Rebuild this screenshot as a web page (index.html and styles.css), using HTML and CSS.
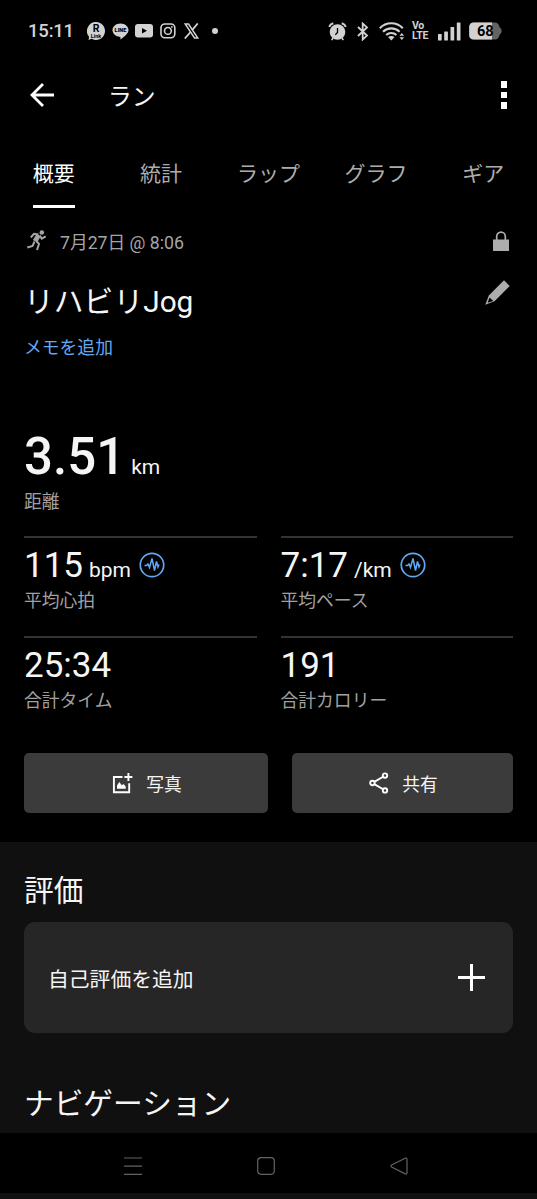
FILE: index.html
```html
<!DOCTYPE html>
<html lang="ja">
<head>
    <meta charset="UTF-8">
    <meta name="viewport" content="width=device-width, initial-scale=1.0">
    <title>ラン</title>
    <link rel="stylesheet" href="styles.css">
</head>
<body>
    <div class="status-bar">
        <span class="clock">15:11</span>
        <svg class="icon-link" width="18" height="18" viewBox="0 0 18 18">
            <path d="M9 0a9 9 0 1 1-4.500 16.800L1.500 18l.6-3.200A9 9 0 0 1 9 0z" fill="#d2d2d2"/>
            <text x="9" y="9.500" text-anchor="middle" font-size="10.500" font-weight="700">R</text>
            <text x="9" y="16" text-anchor="middle" font-size="5.500" font-weight="700">Link</text>
        </svg>
        <svg class="icon-line" width="17" height="17" viewBox="0 0 17 17">
            <path d="M8.500.5c4.500 0 8 2.900 8 6.600 0 3.300-3.600 6.200-7.900 9.400-.3-.9.100-2.200-.4-2.600C3.700 13.700.5 10.700.5 7.100.5 3.400 4 .5 8.500.5z" fill="#d2d2d2"/>
            <text x="8.500" y="9.300" text-anchor="middle" font-size="5.600" font-weight="900">LINE</text>
        </svg>
        <svg class="icon-youtube" width="18" height="14" viewBox="0 0 18 14">
            <rect width="18" height="13.500" rx="3" fill="#d2d2d2"/>
            <path d="M7 4l5 2.800-5 2.800z" fill="#000"/>
        </svg>
        <svg class="icon-instagram" width="16" height="16" viewBox="0 0 16 16" fill="none" stroke="#d2d2d2" stroke-width="1.600">
            <rect x="1" y="1" width="13.800" height="13.800" rx="3.800"/>
            <circle cx="7.900" cy="7.900" r="3.400"/>
            <circle cx="11.900" cy="3.900" r=".9" fill="#d2d2d2" stroke="none"/>
        </svg>
        <svg class="icon-x" width="15" height="16" viewBox="0 0 15 16" fill="none" stroke="#d2d2d2">
            <path d="M1.200 1h3.300l9.300 14h-3.300z" stroke-width="1.500"/>
            <path d="M13.700.5L8.300 6.900M6.600 9L.8 15.500" stroke-width="1.800"/>
        </svg>
        <span class="dot"></span>
        <div class="status-right">
            <svg class="icon-alarm" width="19" height="19" viewBox="0 0 19 19">
                <circle cx="9.500" cy="10" r="7.800" fill="#d2d2d2"/>
                <path d="M1.200 4.800Q2.300 2 5.300 1.200M17.800 4.800Q16.700 2 13.700 1.200" fill="none" stroke="#d2d2d2" stroke-width="2"/>
                <path d="M5 16l-1.300 2.200M14 16l1.300 2.200" stroke="#d2d2d2" stroke-width="1.600"/>
                <path d="M9.500 6v4.500L7.300 12.700" fill="none" stroke="#000" stroke-width="1.300"/>
            </svg>
            <svg class="icon-bluetooth" width="12" height="19" viewBox="0 0 12 19" fill="none" stroke="#d2d2d2" stroke-width="1.800">
                <path d="M1 5l9 8.600-4.300 3.900V1.500L10 5.400 1 14"/>
            </svg>
            <svg class="icon-wifi" width="26" height="19" viewBox="0 0 26 19">
                <g fill="none" stroke="#d2d2d2" stroke-width="2.100">
                    <path d="M.8 6.200a16 16 0 0 1 23 0"/>
                    <path d="M4 9.700a12 12 0 0 1 16.600 0"/>
                    <path d="M7.200 13a7.500 7.500 0 0 1 10.200 0"/>
                </g>
                <path d="M12.300 18.500l-3.200-3.400q3.200-2.300 6.400 0z" fill="#d2d2d2"/>
                <path d="M20.500 13.700h4.600l-2.300-2.700zM20.500 15.300h4.600L22.800 18z" fill="#d2d2d2"/>
            </svg>
            <span class="volte"><span>Vo</span><span>LTE</span></span>
            <svg class="icon-signal" width="23" height="19" viewBox="0 0 23 19" fill="#d2d2d2">
                <rect y="12" width="3.700" height="6.500" rx=".6"/>
                <rect x="6.200" y="9.500" width="3.700" height="9" rx=".6"/>
                <rect x="12.500" y="5" width="3.700" height="13.500" rx=".6"/>
                <rect x="18.800" y=".5" width="3.700" height="18" rx=".6"/>
            </svg>
            <svg class="icon-battery" width="33" height="18" viewBox="0 0 33 18">
                <path d="M5 .5h21q3.500 0 4.500 4.500Q32.700 6.500 32.700 9T30.500 13q-1 4.500-4.500 4.500H5Q.2 17.500.2 12.700V5.300Q.2.5 5 .5z" fill="#636363"/>
                <path d="M5 .5h18v17H5Q.2 17.500.2 12.700V5.300Q.2.5 5 .5z" fill="#d2d2d2"/>
                <text x="16.300" y="14.100" text-anchor="middle" font-size="14.500" font-weight="700">68</text>
            </svg>
        </div>
    </div>

    <header class="app-bar">
        <svg width="26" height="26" viewBox="0 0 26 26" fill="none" stroke="#fff" stroke-width="2.800">
            <path d="M25 13H3M14 2L3 13l11 11"/>
        </svg>
        <h1>ラン</h1>
        <div class="more"><i></i><i></i><i></i></div>
    </header>

    <nav class="tabs">
        <a class="tab active">概要</a>
        <a class="tab">統計</a>
        <a class="tab">ラップ</a>
        <a class="tab">グラフ</a>
        <a class="tab">ギア</a>
    </nav>

    <main class="summary">
        <div class="date-row">
            <svg class="runner" width="20" height="21" viewBox="0 0 20 21">
                <circle cx="14.800" cy="2.500" r="2.300" fill="#a5a5a5"/>
                <path d="M11.700 5L8 11.300" stroke="#a5a5a5" stroke-width="4.800" fill="none"/>
                <path d="M11.500 4.500L7 3.800 3.800 7.500M12.700 5.500l2.100 3.100 3.900-2.200M9.500 11l2.500 3-2 6M7.500 11.500L5.600 16 .3 17.500" fill="none" stroke="#a5a5a5" stroke-width="2"/>
            </svg>
            <span class="date">7月27日 @ 8:06</span>
            <svg class="lock" width="16" height="20" viewBox="0 0 16 20">
                <path d="M3.700 9V5.500a4.300 4.300 0 0 1 8.600 0V9" fill="none" stroke="#adadad" stroke-width="1.700"/>
                <rect y="8.500" width="16" height="11.500" fill="#adadad"/>
            </svg>
        </div>
        <div class="title-row">
            <h2>リハビリJog</h2>
            <svg width="25" height="25" viewBox="0 0 25 25">
                <path d="M19 .3L24.700 6 9.500 21.200.3 24.700 3.800 15.500z" fill="#adadad"/>
                <path d="M4.600 17.500l3.600 3.400-5.600 1.900z" fill="#000"/>
            </svg>
        </div>
        <a class="memo">メモを追加</a>

        <div class="distance">
            <div class="value">3.51<span class="unit">km</span></div>
            <div class="label">距離</div>
        </div>

        <div class="stats">
            <div class="stat">
                <div class="value">115<span class="unit">bpm</span>
                    <svg class="pulse" width="26" height="26" viewBox="0 0 26 26" fill="none" stroke="#62a8f5">
                        <circle cx="13" cy="13" r="11.700" stroke-width="1.700"/>
                        <path d="M5.500 13.500h2l1.500-1.500 1.500 3.500L13 6.500l2.500 12 2-9 1.500 5.500 1-2.500" stroke-width="1.500"/>
                    </svg>
                </div>
                <div class="label">平均心拍</div>
            </div>
            <div class="stat">
                <div class="value">7:17<span class="unit">/km</span>
                    <svg class="pulse" width="26" height="26" viewBox="0 0 26 26" fill="none" stroke="#62a8f5">
                        <circle cx="13" cy="13" r="11.700" stroke-width="1.700"/>
                        <path d="M5.500 13.500h2l1.500-1.500 1.500 3.500L13 6.500l2.500 12 2-9 1.500 5.500 1-2.500" stroke-width="1.500"/>
                    </svg>
                </div>
                <div class="label">平均ペース</div>
            </div>
            <div class="stat">
                <div class="value">25:34</div>
                <div class="label">合計タイム</div>
            </div>
            <div class="stat">
                <div class="value">191</div>
                <div class="label">合計カロリー</div>
            </div>
        </div>

        <div class="actions">
            <button class="btn-photo">
                <svg width="21" height="21" viewBox="0 0 21 21">
                    <path d="M10.500 4H1.900v15.200h15.300v-9" fill="none" stroke="#fff" stroke-width="1.900"/>
                    <path d="M16.400 0v8M12.400 4h8" stroke="#fff" stroke-width="1.900"/>
                    <path d="M5 15.700v-3.200L7.300 9l2.400 3.200 1.700-1.200 2.300 2.500v2.200z" fill="#fff"/>
                </svg>
                <span>写真</span>
            </button>
            <button class="btn-share">
                <svg width="20" height="22" viewBox="0 0 20 22" fill="none" stroke="#fff" stroke-width="1.900">
                    <circle cx="3.400" cy="11" r="2.200"/>
                    <circle cx="16" cy="3.600" r="2.200"/>
                    <circle cx="16" cy="18.400" r="2.200"/>
                    <path d="M5.300 9.900l8.800-5.200M5.300 12.100l8.800 5.200"/>
                </svg>
                <span>共有</span>
            </button>
        </div>
    </main>

    <section class="more-info">
        <h2>評価</h2>
        <div class="card">
            <span>自己評価を追加</span>
            <svg width="27" height="27" viewBox="0 0 27 27" stroke="#fff" stroke-width="3">
                <path d="M13.500 0v27M0 13.500h27"/>
            </svg>
        </div>
        <h2>ナビゲーション</h2>
    </section>

    <footer class="system-nav">
        <svg width="18" height="18" viewBox="0 0 18 18" stroke="#636363" stroke-width="1.200">
            <path d="M0 1h18M0 9.200h18M0 17.400h18"/>
        </svg>
        <svg width="18" height="18" viewBox="0 0 18 18" fill="none" stroke="#636363" stroke-width="1.200">
            <rect x=".7" y=".7" width="16.600" height="16.600" rx="3.500"/>
        </svg>
        <svg width="18" height="18" viewBox="0 0 18 18" fill="none" stroke="#636363" stroke-width="1.200">
            <path d="M15.200 1.200L1.600 8Q.2 9 1.600 10l13.600 6.900q1.800.5 1.800-1.200V2.400Q17 .8 15.200 1.200z"/>
        </svg>
    </footer>
</body>
</html>
```
FILE: styles.css
```css
* {
    box-sizing: border-box;
}

body {
    margin: 0;
    height: 1199px;
    display: flex;
    flex-direction: column;
    overflow: hidden;
    background-color: #000;
    color: #f5f5f5;
    font-family: Roboto, "Noto Sans CJK JP", sans-serif;
}

h1,
h2 {
    margin: 0;
    font-weight: 400;
}

svg {
    display: block;
    flex-shrink: 0;
}

/* ステータスバー */
.status-bar {
    height: 62px;
    padding: 0 35px 0 28px;
    display: flex;
    align-items: center;
    color: #d2d2d2;
}

.clock {
    width: 59px;
    font-size: 18.5px;
    font-weight: 500;
    letter-spacing: -0.2px;
}

.icon-line {
    margin-left: 7px;
}

.icon-youtube {
    margin-left: 6px;
}

.icon-instagram {
    margin-left: 7px;
}

.icon-x {
    margin-left: 8px;
}

.dot {
    width: 6px;
    height: 6px;
    margin-left: 13px;
    border-radius: 50%;
    background-color: #d2d2d2;
}

.status-right {
    margin-left: auto;
    display: flex;
    align-items: center;
}

.icon-bluetooth {
    margin-left: 10px;
}

.icon-wifi {
    margin-left: 10px;
}

.volte {
    width: 17px;
    margin-left: 7px;
    display: flex;
    flex-direction: column;
    font-size: 10.5px;
    line-height: 10.5px;
    font-weight: 700;
    letter-spacing: -0.3px;
}

.icon-signal {
    margin-left: 9px;
}

.icon-battery {
    margin-left: 8px;
}

/* アプリバー */
.app-bar {
    height: 66px;
    padding: 0 30px 0 29px;
    display: flex;
    align-items: center;
}

.app-bar h1 {
    margin-left: 53px;
    padding-top: 4px;
    font-size: 23.8px;
    line-height: 32px;
}

.more {
    margin-left: auto;
    display: flex;
    flex-direction: column;
    gap: 4px;
}

.more i {
    width: 6px;
    height: 6.5px;
    background-color: #fff;
}

/* タブ */
.tabs {
    height: 80px;
    display: grid;
    grid-template-columns: repeat(5, 1fr);
    justify-items: center;
}

.tab {
    height: 80px;
    padding-top: 31px;
    font-size: 21px;
    line-height: 30px;
    color: #adadad;
}

.tab.active {
    color: #fff;
    border-bottom: 3px solid #fff;
}

/* 概要 */
.summary {
    height: 634px;
    padding: 22px 24px 0;
}

.date-row {
    height: 24px;
    padding: 0 4px 0 3px;
    display: flex;
    align-items: center;
    color: #a5a5a5;
}

.runner {
    margin-bottom: 3px;
}

.date {
    margin-left: 13px;
    padding-top: 1px;
    font-size: 17.7px;
    line-height: 24px;
}

.lock {
    margin: 0 0 2px auto;
}

.title-row {
    height: 40px;
    margin-top: 26px;
    padding-right: 3px;
    display: flex;
    justify-content: space-between;
}

.title-row h2 {
    padding-top: 2px;
    font-size: 29.8px;
    line-height: 40px;
}

.memo {
    display: block;
    margin-top: 16px;
    font-size: 17.8px;
    line-height: 24px;
    color: #62a8f5;
}

.unit {
    font-size: 21px;
    font-weight: 400;
}

.label {
    font-size: 17.8px;
    line-height: 24px;
    color: #a0a0a0;
}

.distance {
    margin-top: 67px;
    height: 109px;
}

.distance .value {
    height: 63px;
    font-size: 51px;
    line-height: 60px;
    font-weight: 500;
}

.distance .unit {
    margin-left: 6px;
}

.stats {
    display: grid;
    grid-template-columns: 1fr 1fr;
    grid-auto-rows: 99.5px;
    column-gap: 24px;
}

.stat {
    border-top: 2px solid #333;
    padding-top: 8px;
}

.stat .value {
    height: 43px;
    display: flex;
    align-items: baseline;
    font-size: 35px;
    line-height: 40px;
}

.stat .unit {
    margin-left: 6px;
}

.pulse {
    align-self: flex-start;
    margin: 6px 0 0 8px;
}

.actions {
    margin-top: 18px;
    display: flex;
    gap: 24px;
}

.actions button {
    height: 60px;
    padding: 0 0 0 2px;
    border: none;
    border-radius: 5px;
    background-color: #3b3b3b;
    color: #f5f5f5;
    display: flex;
    justify-content: center;
    align-items: center;
    gap: 13px;
    font-family: inherit;
    font-size: 17.8px;
}

.btn-photo {
    width: 244px;
}

.btn-share {
    flex: 1;
}

/* 評価・ナビゲーション */
.more-info {
    height: 291px;
    padding: 29px 24px 0;
    background-color: #101010;
}

.more-info h2 {
    font-size: 29.7px;
    line-height: 40px;
}

.card {
    height: 111px;
    margin: 11px 0 51px;
    padding: 0 28px 0 24px;
    border-radius: 11px;
    background-color: #262626;
    display: flex;
    justify-content: space-between;
    align-items: center;
    font-size: 20.8px;
}

/* 端末のナビゲーション */
.system-nav {
    height: 66px;
    padding: 24px 129px 0 124px;
    border-bottom: 6px solid #101010;
    display: flex;
    justify-content: space-between;
}
```
